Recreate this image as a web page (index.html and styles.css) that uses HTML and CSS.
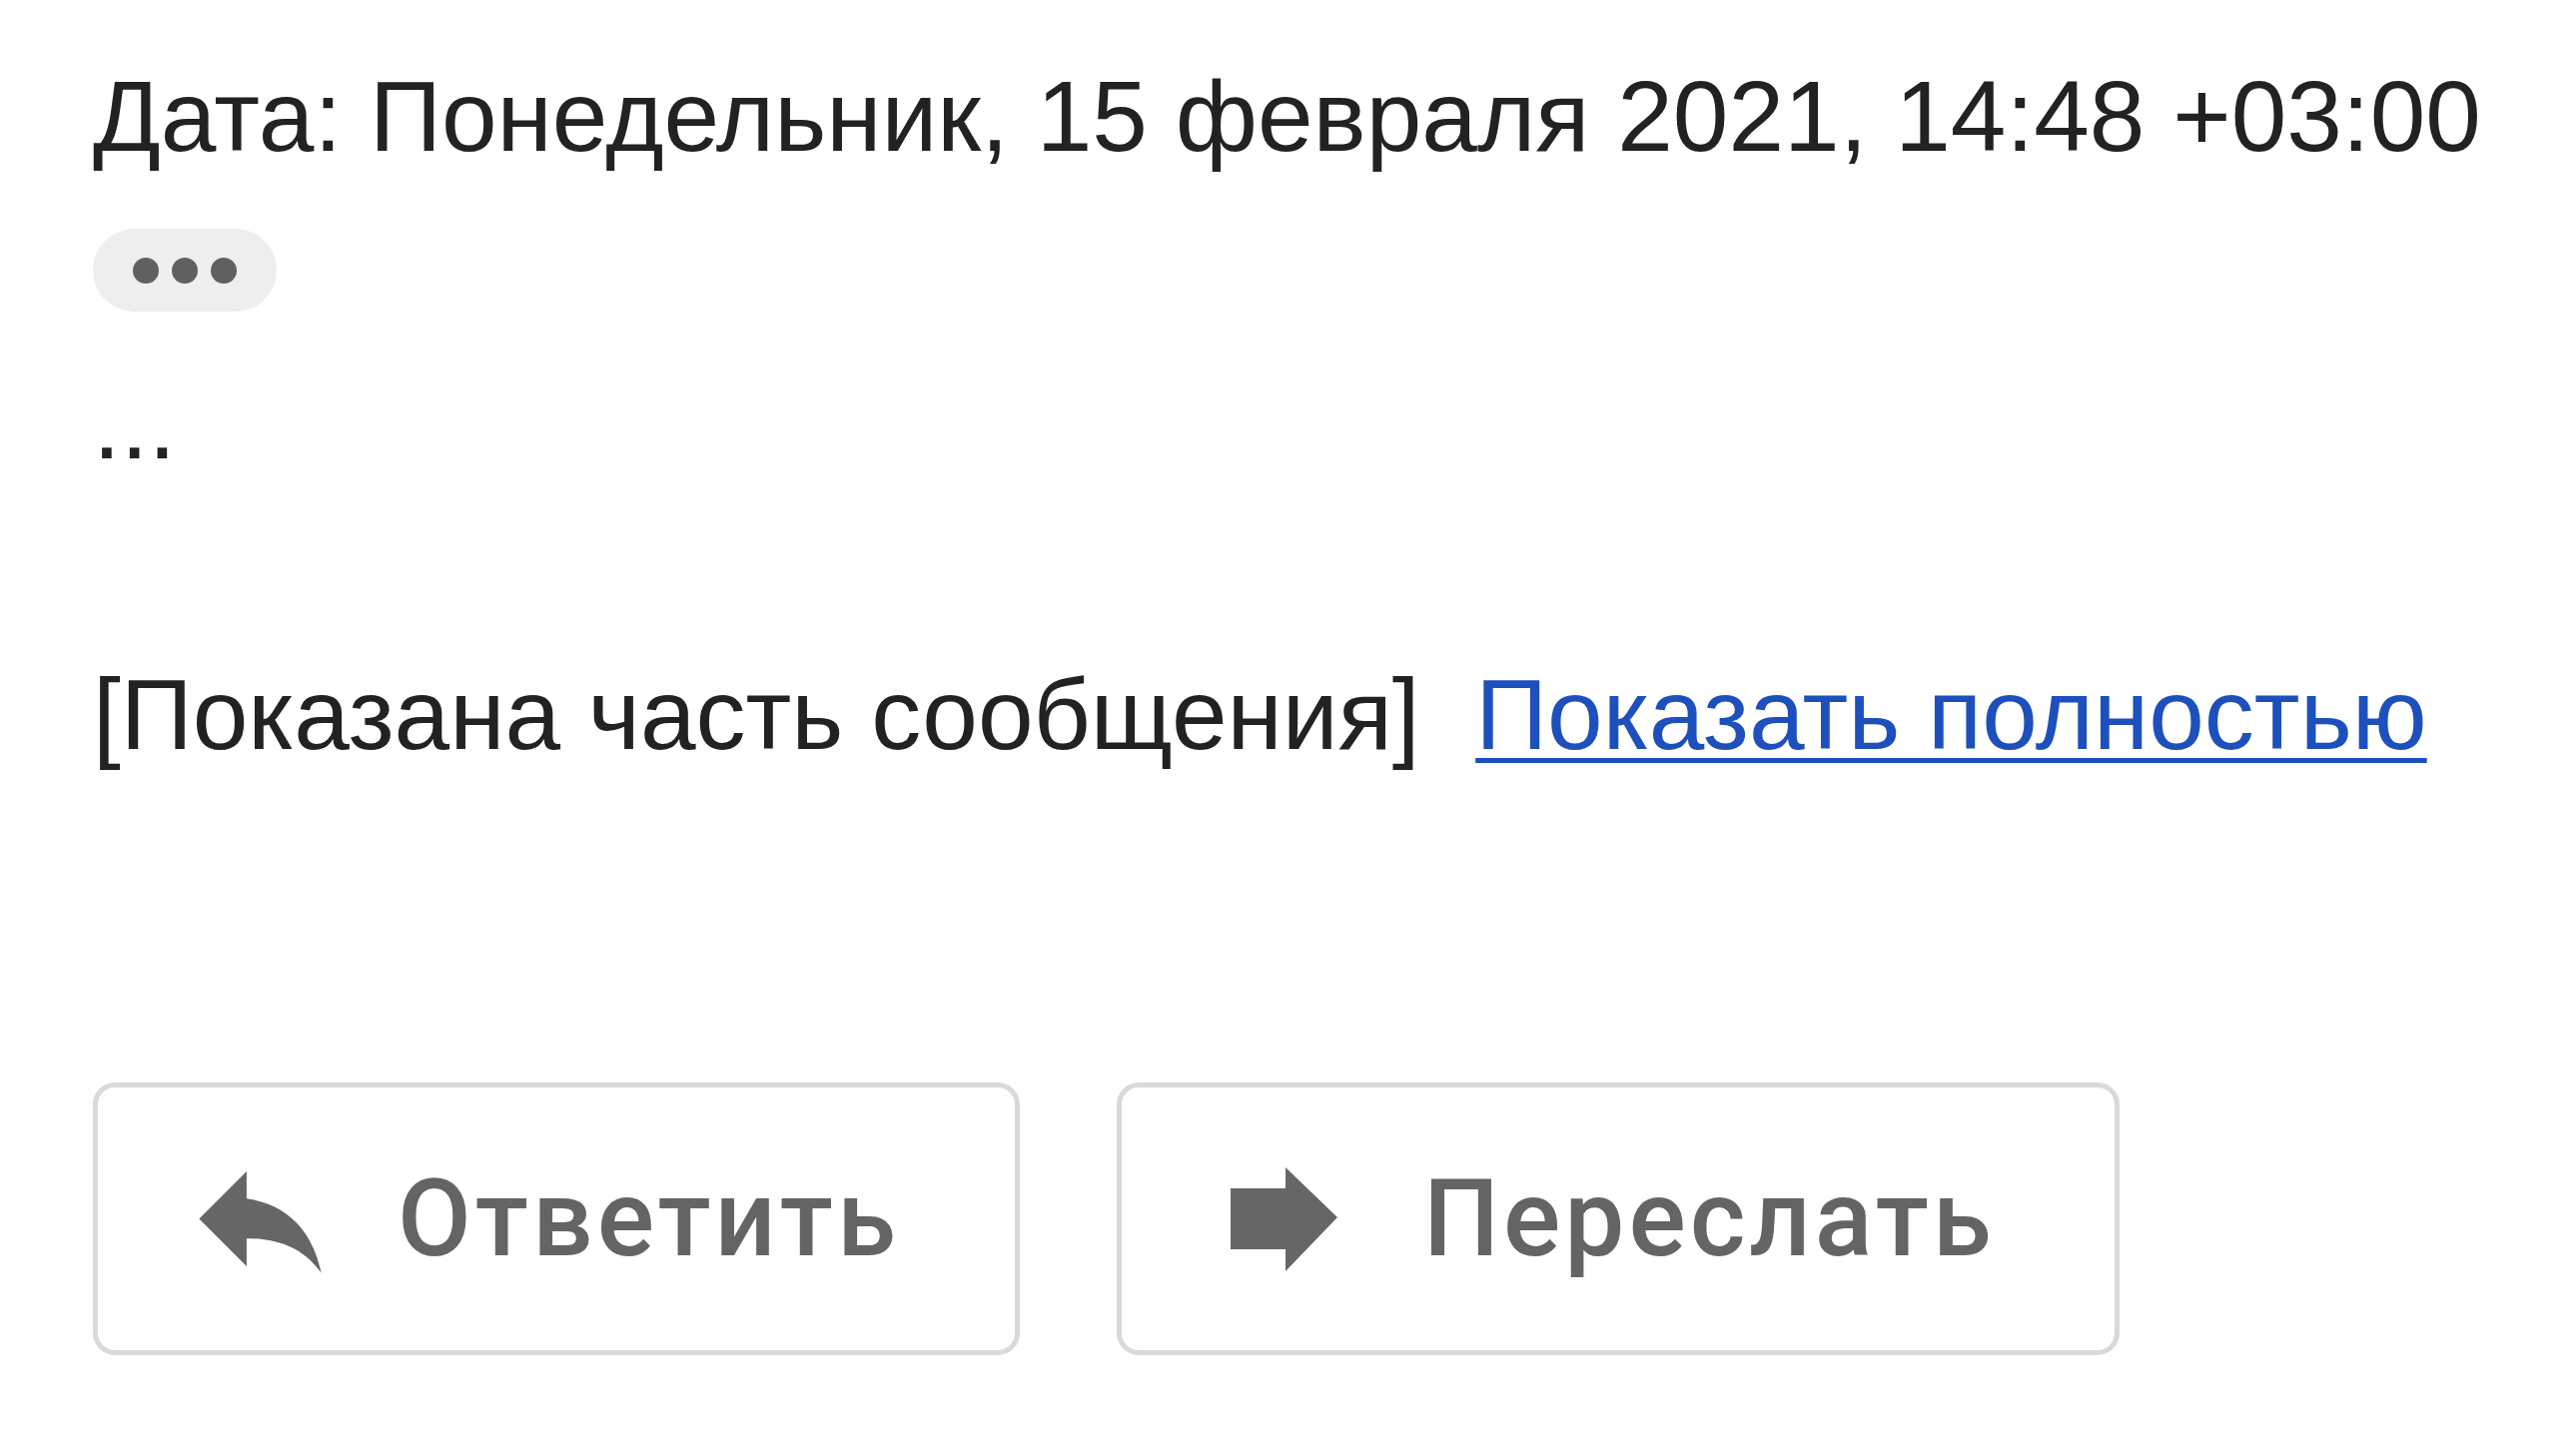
FILE: index.html
```html
<!DOCTYPE html>
<html lang="ru">
<head>
<meta charset="utf-8">
<title>Письмо</title>
<link rel="stylesheet" href="styles.css">
</head>
<body>
<div class="mail">
  <div class="line date">Дата: Понедельник, 15 февраля 2021, 14:48 +03:00</div>
  <div class="pill" aria-label="Показать скрытое"><span class="dot"></span><span class="dot"></span><span class="dot"></span></div>
  <div class="line ellipsis">...</div>
  <div class="line clipped">[Показана часть сообщения]&nbsp; <a class="link" href="#">Показать полностью</a></div>
  <div class="actions">
    <div class="btn btn-reply">
      <svg class="icon-reply" viewBox="0 0 24 24"><path d="M10 9V5l-7 7 7 7v-4.1c5 0 8.5 1.6 11 5.1-1-5-4-10-11-11z"/></svg>
      <span class="btn-label">Ответить</span>
    </div>
    <div class="btn btn-forward">
      <svg class="icon-forward" viewBox="0 0 107 104"><path d="M0 21h55V0l52 50-52 54V82H0z"/></svg>
      <span class="btn-label">Переслать</span>
    </div>
  </div>
</div>
</body>
</html>
```
FILE: styles.css
```css
html, body {
  margin: 0;
  padding: 0;
  background: #ffffff;
}

.mail {
  padding: 59px 0 0 93px;
  font-family: "Liberation Sans", Arial, sans-serif;
  color: #222222;
}

.line {
  font-size: 100px;
  line-height: 115px;
  white-space: nowrap;
}

.pill {
  margin-top: 55px;
  width: 184px;
  height: 83px;
  border-radius: 42px;
  background: #eeeeee;
  display: flex;
  align-items: center;
  justify-content: center;
  gap: 13px;
}

.dot {
  width: 26px;
  height: 26px;
  border-radius: 50%;
  background: #606060;
}

.ellipsis {
  margin-top: 55px;
}

.clipped {
  margin-top: 176px;
}

.link {
  color: #1d50bc;
  text-decoration: underline;
  text-decoration-thickness: 5px;
  text-underline-offset: 9px;
}

.actions {
  margin-top: 311px;
  display: flex;
  gap: 97px;
}

.btn {
  box-sizing: border-box;
  height: 273px;
  border: 5px solid #d9d9d9;
  border-radius: 22px;
  display: flex;
  align-items: center;
  font-family: Roboto, "Liberation Sans", sans-serif;
  font-weight: 500;
  font-size: 107px;
  letter-spacing: 4px;
  color: #646464;
}

.btn-reply {
  width: 928px;
  padding-left: 81px;
  gap: 56px;
}

.btn-forward {
  width: 1004px;
  padding-left: 109px;
  gap: 86px;
}

.icon-reply {
  width: 163px;
  height: 163px;
  fill: #666666;
  flex: none;
}

.icon-forward {
  width: 107px;
  height: 104px;
  fill: #666666;
  flex: none;
}

.btn-label {
  line-height: 1;
}
```
